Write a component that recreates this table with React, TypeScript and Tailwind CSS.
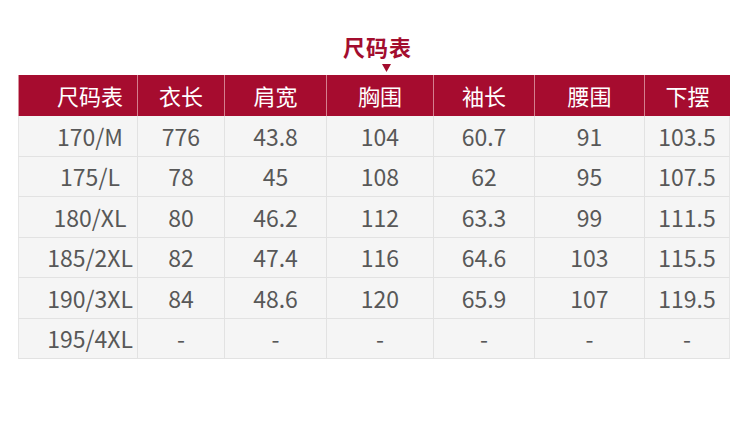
import React from "react";

const headers = ["尺码表", "衣长", "肩宽", "胸围", "袖长", "腰围", "下摆"];
const rows = [
  ["170/M", "776", "43.8", "104", "60.7", "91", "103.5"],
  ["175/L", "78", "45", "108", "62", "95", "107.5"],
  ["180/XL", "80", "46.2", "112", "63.3", "99", "111.5"],
  ["185/2XL", "82", "47.4", "116", "64.6", "103", "115.5"],
  ["190/3XL", "84", "48.6", "120", "65.9", "107", "119.5"],
  ["195/4XL", "-", "-", "-", "-", "-", "-"],
];

const font = { fontFamily: '"Noto Sans CJK SC", "Noto Sans", sans-serif' };

export default function App() {
  return (
    <div className="w-[750px] h-[422px] bg-white overflow-hidden" style={font}>
      <div className="pl-[18px] pt-[33px]">
        <div className="w-[712px] flex flex-col">
          <div className="flex justify-center pl-[7px] h-[26px] items-center">
            <span className="text-[22px] leading-[26px] font-bold text-[#a30d2e] tracking-[1px]">尺码表</span>
          </div>
          <div className="flex justify-center pl-[24px] mt-[5px] h-[8px]">
            <svg width="9" height="8" viewBox="0 0 9 8">
              <path d="M0 0 L9 0 L4.5 8 Z" fill="#a30d2e" />
            </svg>
          </div>
          <div className="mt-[3px] grid grid-cols-[119px_87px_102px_107px_101px_110px_86px]">
            {headers.map((h, i) => (
              <div
                key={h}
                className={`h-[41px] bg-[#a60c2f] text-white text-[22px] flex items-center justify-center ${
                  i === 0 ? "pl-[24px] border-l border-l-[#d9909c]" : "border-l border-l-[#d57f8f]"
                }`}
              >
                {h}
              </div>
            ))}
            {rows.map((r, ri) =>
              r.map((c, ci) => (
                <div
                  key={`${ri}-${ci}`}
                  className={`h-[40.5px] bg-[#f5f5f5] border-b border-b-[#e2e2e2] text-[23px] text-[#585858] flex items-center justify-center ${
                    ci === 0 ? "pl-[24px] border-l border-l-[#e6e6e6]" : "border-l border-l-[#e2e2e2]"
                  } ${ci === 6 ? "border-r border-r-[#e6e6e6]" : ""}`}
                >
                  {c}
                </div>
              ))
            )}
          </div>
        </div>
      </div>
    </div>
  );
}
